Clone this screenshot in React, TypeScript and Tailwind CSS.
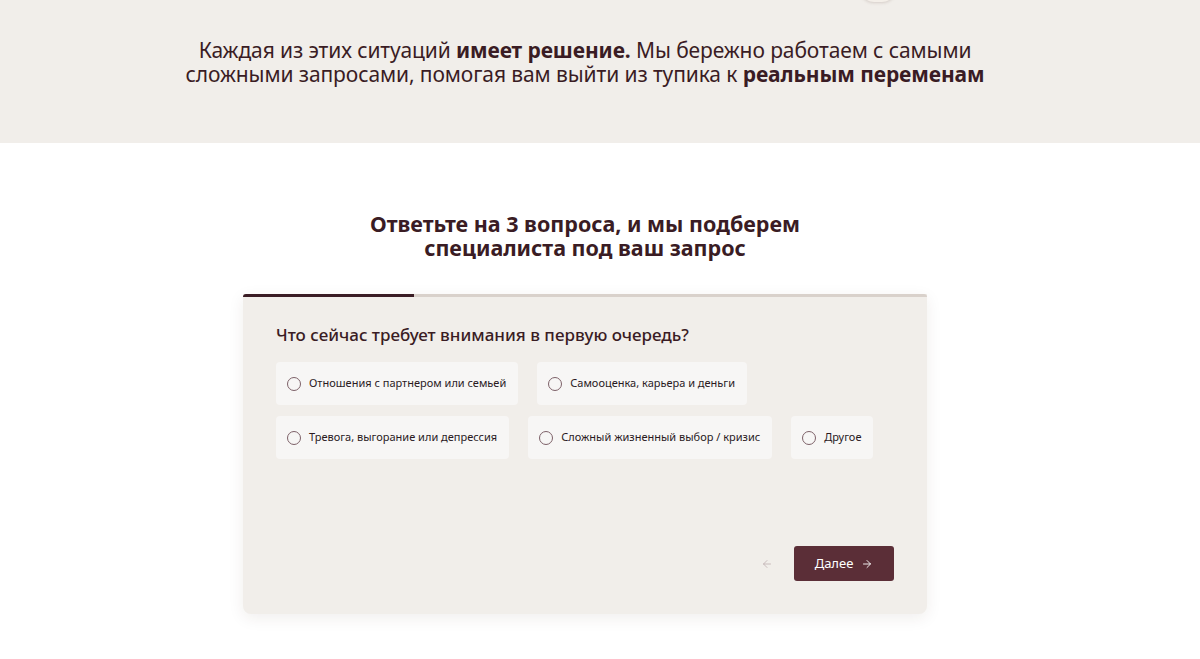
import { ArrowLeft, ArrowRight } from "lucide-react"

const options = [
  ["Отношения с партнером или семьей", "Самооценка, карьера и деньги"],
  ["Тревога, выгорание или депрессия", "Сложный жизненный выбор / кризис", "Другое"],
]

function Radio() {
  return <span className="w-[14px] h-[14px] rounded-full border-[1.5px] border-[#7d6168] shrink-0" />
}

export default function App() {
  return (
    <div className="min-h-[659px] bg-white text-[#3a1c24] font-['Noto_Sans',sans-serif]">
      {/* intro band */}
      <section className="relative h-[143px] bg-[#f1eeea] overflow-hidden">
        <div className="absolute top-[-12px] left-[860px] w-[36px] h-[14px] rounded-b-full bg-[#f4efe9] shadow-[0_1px_3px_rgba(120,90,80,0.22)]" />
        <div className="w-[1170px] pt-[38px]">
          <p className="text-center text-[21px] leading-[24px] tracking-[-0.1px]">
            Каждая из этих ситуаций <b className="font-bold">имеет решение.</b> Мы бережно работаем с самыми
            <br />
            сложными запросами, помогая вам выйти из тупика к <b className="font-bold">реальным переменам</b>
          </p>
        </div>
      </section>

      {/* quiz */}
      <section className="w-[1170px] pt-[69px] pb-[44px] flex flex-col items-center">
        <h2 className="text-center text-[21.5px] leading-[24px] font-bold">
          Ответьте на 3 вопроса, и мы подберем
          <br />
          специалиста под ваш запрос
        </h2>

        <div className="mt-[34px] w-[684px] h-[320px] bg-[#f1eeea] rounded-b-lg shadow-[0_4px_16px_rgba(60,40,30,0.08)] flex flex-col">
          <div className="h-[3px] bg-[#d9d1cb] rounded-t-sm">
            <div className="h-full w-[171px] bg-[#3a1c24] rounded-tl-sm" />
          </div>

          <div className="px-[33px] pt-[27px] flex-1 flex flex-col">
            <h3 className="text-[17px] leading-[22px] font-medium">Что сейчас требует внимания в первую очередь?</h3>

            <div className="mt-[16px] flex flex-col gap-[11px]">
              {options.map((row, i) => (
                <div key={i} className="flex gap-[19px]">
                  {row.map((label) => (
                    <button
                      key={label}
                      className="h-[43px] pl-[11px] pr-[12px] flex items-center gap-[8px] bg-[#f7f6f5] rounded-[4px] text-[11px] text-[#2a1a1e]"
                    >
                      <Radio />
                      {label}
                    </button>
                  ))}
                </div>
              ))}
            </div>

            <div className="mt-auto mb-[33px] flex items-center justify-end gap-[19px]">
              <button className="text-[#bfaeb1] px-[2px]">
                <ArrowLeft size={12} strokeWidth={1.6} />
              </button>
              <button className="w-[100px] h-[35px] bg-[#5b2e37] rounded-[3px] text-white text-[13px] flex items-center justify-center gap-[8px]">
                Далее <ArrowRight size={12} strokeWidth={1.8} />
              </button>
            </div>
          </div>
        </div>
      </section>
    </div>
  )
}
